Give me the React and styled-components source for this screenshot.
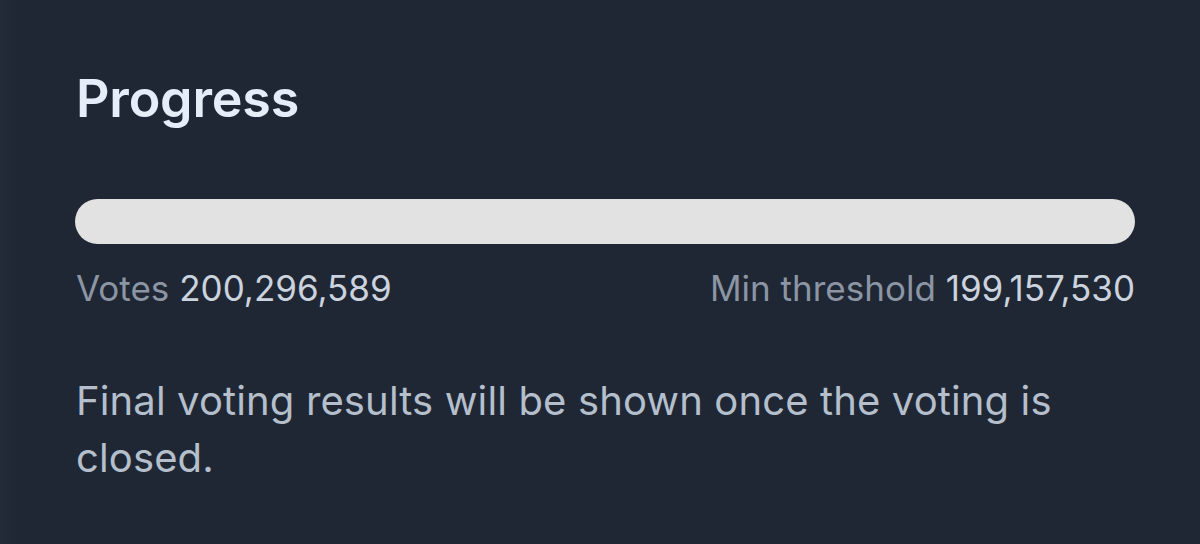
import React from 'react';
import styled, { createGlobalStyle } from 'styled-components';

const GlobalStyle = createGlobalStyle`
  html, body {
    margin: 0;
    padding: 0;
    background: #1f2734;
  }

  body {
    font-family: Inter, 'Noto Sans', sans-serif;
    -webkit-font-smoothing: antialiased;
  }
`;

const Card = styled.section`
  box-sizing: border-box;
  width: 1200px;
  height: 544px;
  padding: 73px 65px 0 75px;
  background: linear-gradient(to right, #232b38 0, #202835 12px, #1f2734 24px);
  overflow: hidden;
`;

const Title = styled.h2`
  margin: 0 0 74px 1px;
  font-size: 52px;
  line-height: 52px;
  font-weight: 600;
  color: #e4edf8;
  letter-spacing: -0.2px;
`;

const Track = styled.div`
  height: 45px;
  border-radius: 23px;
  background: #e2e2e2;
  overflow: hidden;
`;

const Fill = styled.div`
  height: 100%;
  background: #e2e2e2;
`;

const Stats = styled.div`
  display: flex;
  justify-content: space-between;
  margin: 27px 0 0 1px;
  font-size: 35px;
  line-height: 35px;
`;

const Stat = styled.span`
  color: #8b95a3;

  b {
    font-weight: 400;
    color: #cbd3de;
  }
`;

const Note = styled.p`
  margin: 66px 0 0 1px;
  font-size: 40px;
  line-height: 57px;
  letter-spacing: 0.13px;
  color: #b5bfcc;
`;

const votes = 200296589;
const threshold = 199157530;
const fmt = n => n.toLocaleString('en-US');

const App = () => {
  const pct = Math.min(100, (votes / threshold) * 100);

  return (
    <>
      <GlobalStyle />
      <Card>
        <Title>Progress</Title>
        <Track>
          <Fill style={{ width: `${pct}%` }} />
        </Track>
        <Stats>
          <Stat>
            Votes <b>{fmt(votes)}</b>
          </Stat>
          <Stat>
            Min threshold <b>{fmt(threshold)}</b>
          </Stat>
        </Stats>
        <Note>Final voting results will be shown once the voting is closed.</Note>
      </Card>
    </>
  );
};

export default App;
